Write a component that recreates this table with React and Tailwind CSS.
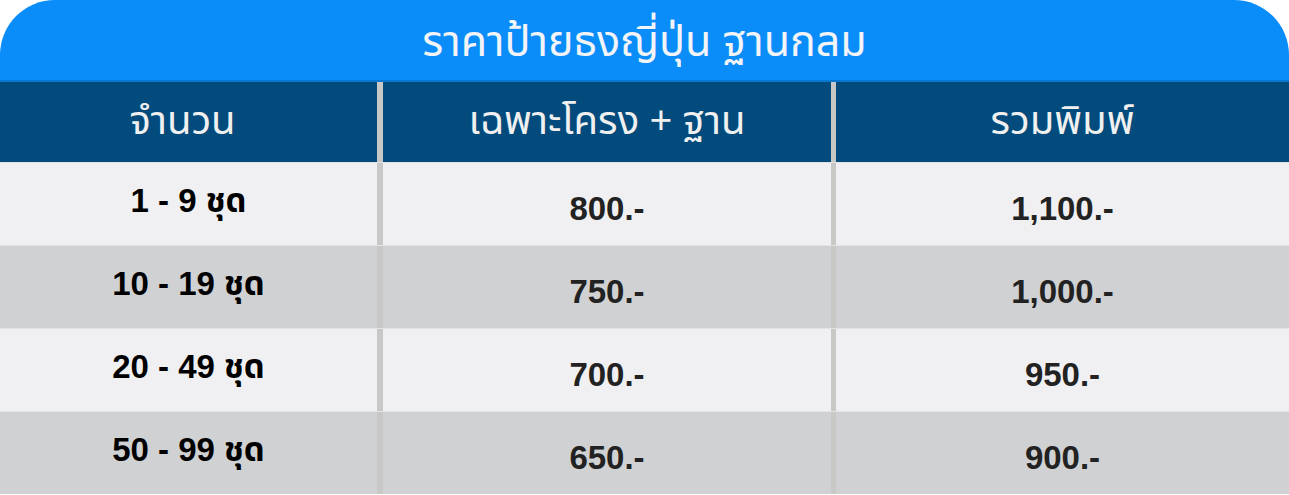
const rows = [
  { qty: "1 - 9 ชุด", frame: "800.-", print: "1,100.-" },
  { qty: "10 - 19 ชุด", frame: "750.-", print: "1,000.-" },
  { qty: "20 - 49 ชุด", frame: "700.-", print: "950.-" },
  { qty: "50 - 99 ชุด", frame: "650.-", print: "900.-" },
];

const thai = '"Noto Sans Thai", "Noto Sans", "Liberation Sans", sans-serif';
const nums = '"Liberation Sans", "Noto Sans Thai", "Noto Sans", sans-serif';

const App = () => {
  return (
    <div className="w-[1289px] h-[495px] bg-white overflow-hidden" style={{ fontFamily: thai }}>
      {/* title */}
      <div className="h-[82px] bg-[#0a8df9] rounded-t-[55px] border-b-2 border-[#0877d2] flex items-center justify-center">
        <h1 className="text-[43px] text-[#f2f4f7] leading-none pt-1">ราคาป้ายธงญี่ปุ่น ฐานกลม</h1>
      </div>

      {/* header */}
      <div className="grid grid-cols-[377px_454px_1fr] h-[80px] bg-[#024b7c] text-[#f0f0f0] text-[40px] leading-none">
        <div className="flex items-center justify-center pr-3">จำนวน</div>
        <div className="flex items-center justify-center border-l-[6px] border-[#c8c8c6]">เฉพาะโครง + ฐาน</div>
        <div className="flex items-center justify-center border-l-[5px] border-[#c8c8c6]">รวมพิมพ์</div>
      </div>

      {/* rows */}
      {rows.map((row, i) => (
        <div
          key={row.qty}
          className={`grid grid-cols-[377px_454px_1fr] h-[83px] border-t border-[#e2e3e5] font-bold text-[33px] leading-none ${
            i % 2 === 0 ? "bg-[#f0f0f2]" : "bg-[#d0d1d3]"
          }`}
          style={{ fontFamily: nums }}
        >
          <div className="flex items-center justify-center pb-2 text-black">{row.qty}</div>
          <div className="flex items-center justify-center pt-2 border-l-[6px] border-[#c8c8c6] text-[#222]">{row.frame}</div>
          <div className="flex items-center justify-center pt-2 border-l-[5px] border-[#c8c8c6] text-[#222]">{row.print}</div>
        </div>
      ))}
    </div>
  );
};

export default App;
